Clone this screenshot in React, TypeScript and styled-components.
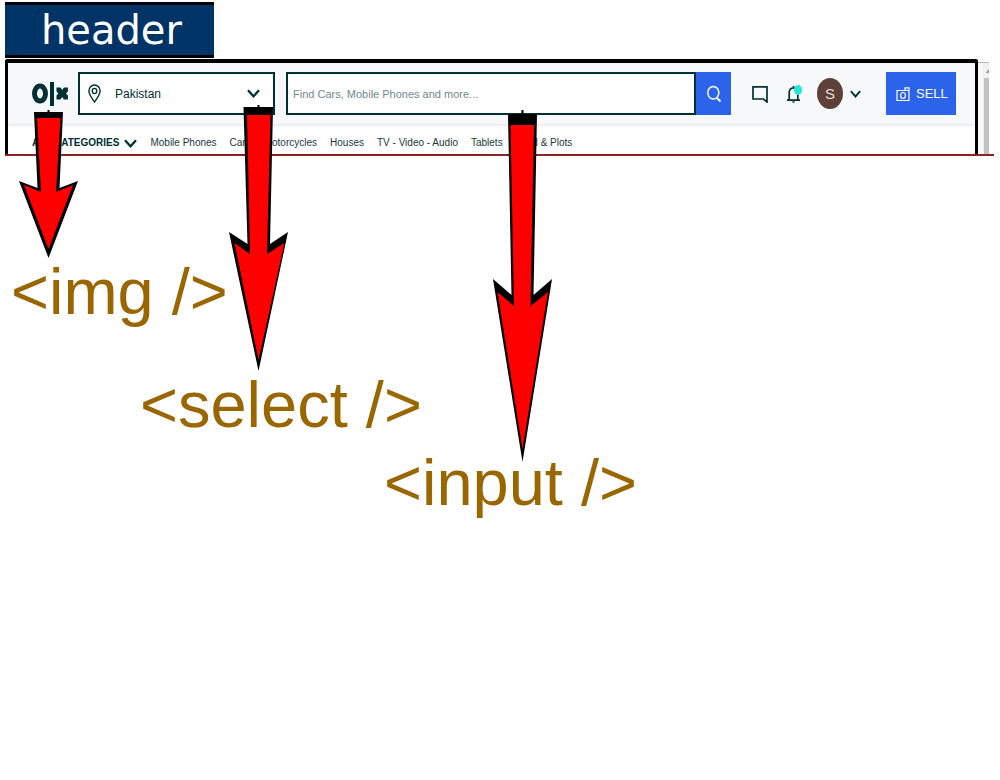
import React from 'react';
import styled, { createGlobalStyle } from 'styled-components';

const ink = '#002f34';
const blue = '#2b64ea';
const sans = '"Liberation Sans", Arial, sans-serif';

const GlobalStyle = createGlobalStyle`
  *, *::before, *::after { box-sizing: border-box; }
  body { margin: 0; background: #fff; font-family: ${sans}; }
  button, input, select { font: inherit; color: inherit; margin: 0; padding: 0; border: 0; border-radius: 0; background: none; }
`;

const Page = styled.main`
  position: relative;
  min-height: 100vh;
  padding: 2px 6px 0 5px;
`;

const Banner = styled.h1`
  width: 209px;
  margin: 0 0 1px;
  padding-left: 36px;
  border: solid #000;
  border-width: 3px 0;
  background: #003366;
  color: #fff;
  font: 400 40px/50px "DejaVu Sans", Verdana, sans-serif;
`;

const Capture = styled.section`
  display: flex;
  padding-right: 5px;
  border-bottom: 2px solid #8c2226;
`;

const Frame = styled.header`
  flex: 1;
  min-width: 0;
  border: solid #000;
  border-width: 4px 3px 0;
  border-radius: 3px 3px 0 0;
  color: ${ink};
`;

const ScrollTrack = styled.div`
  display: flex;
  flex-direction: column;
  align-items: flex-end;
  width: 11px;
  margin-top: 3px;
  border-top: 1px solid #b8b8b8;
  background: linear-gradient(to right, #f7f8fa 5px, #f1f1f1 5px);
`;

const ScrollThumb = styled.div`
  flex: 1;
  width: 5px;
  background: #c1c1c1;
`;

const TopBar = styled.div`
  display: flex;
  align-items: center;
  height: 61px;
  padding: 0 19px 0 24px;
  background: #f7f8fa;
  box-shadow: 0 1px 3px #0000001f;
`;

const LogoLink = styled.a`
  display: flex;
  width: 36px;
  margin-right: 10px;
`;

const Location = styled.label`
  display: grid;
  flex: 0 0 197px;
  height: 43px;
  margin-right: 11px;
  border: 2px solid ${ink};
  background: #fff;
  align-items: center;
  & > * { grid-area: 1 / 1; }
  & > svg { pointer-events: none; z-index: 1; }
  & > svg:first-child { margin-left: 8px; }
  & > svg:last-child { justify-self: end; margin-right: 13px; }
`;

const LocationSelect = styled.select`
  appearance: none;
  width: 100%;
  height: 100%;
  padding-left: 35px;
  font-size: 12px;
`;

const Search = styled.form`
  display: flex;
  flex: 1;
  min-width: 0;
  height: 43px;
`;

const SearchInput = styled.input`
  flex: 1;
  min-width: 0;
  padding: 0 5px;
  border: 2px solid ${ink};
  background: #fff;
  font-size: 11px;
  &::placeholder { color: #6f8a8d; opacity: 1; }
`;

const SearchButton = styled.button`
  display: grid;
  place-items: center;
  width: 35px;
  background: ${blue};
`;

const Actions = styled.div`
  display: flex;
  align-items: center;
  gap: 18px;
  margin-left: 20px;
`;

const IconButton = styled.button`
  display: flex;
  align-items: center;
`;

const AccountButton = styled(IconButton)`
  gap: 7px;
  margin: 0 7px 0 -4px;
`;

const Avatar = styled.span`
  display: grid;
  place-items: center;
  width: 26px;
  height: 31px;
  border-radius: 50%;
  background: #5d4037;
  color: #e8dfdc;
  font-size: 15px;
`;

const SellButton = styled.button`
  display: flex;
  align-items: center;
  gap: 6px;
  width: 70px;
  height: 43px;
  padding-left: 10px;
  background: ${blue};
  color: #fff;
  font-size: 13px;
`;

const CategoryBar = styled.nav`
  display: flex;
  align-items: center;
  gap: 13px;
  height: 30px;
  padding: 8px 24px 0;
  white-space: nowrap;
  line-height: 16px;
`;

const AllCategories = styled.button`
  display: flex;
  align-items: center;
  gap: 5px;
  font-size: 10px;
  font-weight: 700;
`;

const CategoryLink = styled.a`
  color: #17393e;
  font-size: 10px;
  text-decoration: none;
`;

const Labels = styled.div`
  padding-top: 98px;
`;

const TagLabel = styled.p<{ $indent: number; $gap: number }>`
  margin: 0 0 ${(p) => p.$gap}px ${(p) => p.$indent}px;
  color: #996600;
  font-size: 65px;
  line-height: 76px;
  white-space: nowrap;
`;

const Arrows = styled.svg`
  position: absolute;
  top: 0;
  left: 0;
  pointer-events: none;
`;

const Chevron = ({ w, h }: { w: number; h: number }) => (
  <svg width={w} height={h} viewBox="0 0 13 9" fill="none" stroke={ink} strokeWidth="2.2" preserveAspectRatio="none" aria-hidden="true">
    <path d="M1 1.2 6.5 7.3 12 1.2" />
  </svg>
);

const categories = ['Mobile Phones', 'Cars', 'Motorcycles', 'Houses', 'TV - Video - Audio', 'Tablets', 'Land & Plots'];

const arrows = [
  {
    outer: '34,112 63,112 59.5,188 78,181 48.5,258 19,181 37.5,188',
    inner: '37,118 60.5,118 56,192 73,185 48.5,249 24,185 41,192',
    nub: 'M48.5 110v3',
  },
  {
    outer: '243.5,107 273,107 270,244 288,232 258.5,371 229,232 247.5,244',
    inner: '247,115 270.5,115 267,254 284.5,243 258.5,360 234.5,243 250,254',
    nub: 'M258.5 105v3',
  },
  {
    outer: '508,114 537,114 533.5,295 552,279 522.5,462 493,279 511.5,295',
    inner: '510.5,125 534,125 530.5,306 548,292 522.5,449 497.5,292 514,306',
    nub: 'M522.5 110v5',
  },
];

export default function App() {
  return (
    <>
      <GlobalStyle />
      <Page>
        <Banner>header</Banner>
        <Capture>
          <Frame>
            <TopBar>
              <LogoLink href="#" aria-label="OLX">
                <svg width="36" height="26" viewBox="0 0 36 26" aria-hidden="true">
                  <ellipse cx="8" cy="12.5" rx="5.5" ry="7.5" fill="none" stroke={ink} strokeWidth="5" />
                  <path d="M18 1h4v24h-4z" fill={ink} />
                  <path d="m24.500 6.500h4l1.700 2.500 1.700-2.500h4v4l-1.900 2 1.900 2v4h-4l-1.700-2.500-1.700 2.500h-4v-4l1.900-2-1.900-2z" fill={ink} />
                </svg>
              </LogoLink>
              <Location>
                <svg width="13" height="19" viewBox="0 0 13 19" fill="none" stroke={ink} strokeWidth="1.4" aria-hidden="true">
                  <path d="M6.5 18C4 14.5.9 10.5.9 7a5.6 6 0 0 1 11.2 0c0 3.5-3.1 7.5-5.6 11Z" />
                  <ellipse cx="6.5" cy="7" rx="2.2" ry="2.6" />
                </svg>
                <LocationSelect aria-label="Location" defaultValue="Pakistan">
                  <option>Pakistan</option>
                </LocationSelect>
                <Chevron w={13} h={9} />
              </Location>
              <Search onSubmit={(e) => e.preventDefault()}>
                <SearchInput type="text" aria-label="Search" placeholder="Find Cars, Mobile Phones and more..." />
                <SearchButton aria-label="Search">
                  <svg width="16" height="18" viewBox="0 0 16 18" fill="none" stroke="#fff" strokeWidth="1.5" aria-hidden="true">
                    <ellipse cx="7.3" cy="7.8" rx="5.5" ry="6.3" />
                    <path d="m10.5 12.5 4 4" strokeWidth="2" />
                  </svg>
                </SearchButton>
              </Search>
              <Actions>
                <IconButton aria-label="Chat">
                  <svg width="17" height="18" viewBox="0 0 17 18" fill="none" stroke={ink} strokeWidth="1.7" aria-hidden="true">
                    <path d="M2 1.9h14V17l-3.5-3H2Z" />
                  </svg>
                </IconButton>
                <IconButton aria-label="Notifications">
                  <svg width="17" height="20" viewBox="0 0 17 20" aria-hidden="true">
                    <path d="M1 16.2h13M3.2 16V9c0-3 1.8-5 4.3-5s4.3 2 4.3 5v7M7.5 4V2M6.5 18h2" fill="none" stroke={ink} strokeWidth="1.7" />
                    <ellipse cx="12" cy="6" rx="4" ry="5" fill="#23e5db" />
                  </svg>
                </IconButton>
                <AccountButton aria-label="Account">
                  <Avatar>S</Avatar>
                  <Chevron w={11} h={8} />
                </AccountButton>
                <SellButton>
                  <svg width="14" height="16" viewBox="0 0 14 16" fill="none" stroke="#fff" strokeWidth="1.2" aria-hidden="true">
                    <path d="M1 4.5h8V1.8h4v12.7H1ZM9 4.5h4" />
                    <ellipse cx="7" cy="9.5" rx="2.4" ry="3" />
                  </svg>
                  SELL
                </SellButton>
              </Actions>
            </TopBar>
            <CategoryBar>
              <AllCategories>
                ALL CATEGORIES
                <Chevron w={13} h={9} />
              </AllCategories>
              {categories.map((name) => (
                <CategoryLink key={name} href="#">{name}</CategoryLink>
              ))}
            </CategoryBar>
          </Frame>
          <ScrollTrack>
            <svg width="5" height="15" viewBox="0 0 5 15" aria-hidden="true">
              <path d="M1.5 10 5 6v4z" fill="#999" />
            </svg>
            <ScrollThumb />
          </ScrollTrack>
        </Capture>
        <Labels>
          <TagLabel $indent={6} $gap={37}>{'<img />'}</TagLabel>
          <TagLabel $indent={135} $gap={2}>{'<select />'}</TagLabel>
          <TagLabel $indent={379} $gap={0}>{'<input />'}</TagLabel>
        </Labels>
        <Arrows width="560" height="470" viewBox="0 0 560 470" aria-hidden="true">
          {arrows.map((a) => (
            <g key={a.nub}>
              <path d={a.nub} stroke="#000" strokeWidth="2" />
              <polygon points={a.outer} fill="#000" />
              <polygon points={a.inner} fill="#f00" />
            </g>
          ))}
        </Arrows>
      </Page>
    </>
  );
}
